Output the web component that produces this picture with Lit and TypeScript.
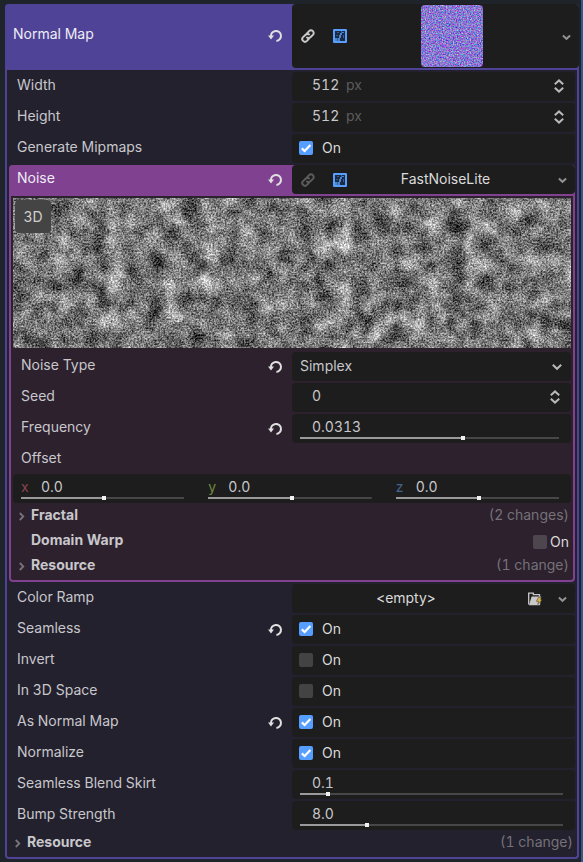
import { LitElement, html, css, nothing } from "lit";
import { customElement, property } from "lit/decorators.js";

const revertIcon = html`<svg class="i" width="16" height="16" viewBox="0 0 16 16" aria-hidden="true">
  <path d="M3 8.4A5 5 0 1 1 8.4 12.9" fill="none" stroke="currentColor" stroke-width="2" />
  <path d="M0 7.4h6L3 11.4z" fill="currentColor" />
</svg>`;

const linkIcon = html`<svg class="i" width="14" height="14" viewBox="0 0 14 14" fill="none" stroke="currentColor" stroke-width="2" stroke-linecap="round" aria-hidden="true">
  <path d="M6.2 4.2 8.1 2.1a2.65 2.65 0 0 1 3.8 3.8L9.4 8.3a2.6 2.6 0 0 1-3.4.2" />
  <path d="M7.8 9.8 5.9 11.9a2.65 2.65 0 0 1-3.8-3.8L4.6 5.7A2.6 2.6 0 0 1 8 5.5" />
</svg>`;

const textureIcon = html`<svg class="i" width="14" height="14" viewBox="0 0 14 14" aria-hidden="true">
  <rect width="14" height="14" rx="1" fill="#569eff" />
  <rect x="2" y="2" width="10" height="10" fill="#1d2a3d" />
  <path d="M9 3h2v1H9v2H8v3H7v3H5V9h1V6h1V4h2zM2 9h2v3H2z" fill="#4a86d6" />
  <path d="M4 3h2v1H4zM3 6h2v1H3zM10 6h1v3h-1zM4 9h1v3H4zM8 2h1v2H8z" fill="#33609f" />
</svg>`;

const chevron = html`<svg class="i" width="9" height="9" viewBox="0 0 9 9" fill="none" stroke="currentColor" stroke-width="2" aria-hidden="true">
  <path d="M.9 2.6l3.6 3.2L8.1 2.6" />
</svg>`;

const wideChevron = html`<svg class="i" width="10" height="8" viewBox="0 0 10 8" fill="none" stroke="currentColor" stroke-width="2" aria-hidden="true">
  <path d="M.8 1.8 5 5.8l4.2-4" />
</svg>`;

const foldChevron = html`<svg class="i" width="6" height="9" viewBox="0 0 6 9" fill="none" stroke="currentColor" stroke-width="1.8" aria-hidden="true">
  <path d="M.8 1 4.3 4.5.8 8" />
</svg>`;

const spinIcon = html`<svg class="i" width="10" height="14" viewBox="0 0 10 14" fill="none" stroke="currentColor" stroke-width="2" aria-hidden="true">
  <path d="M.8 5.2 5 1.4l4.2 3.8M.8 8.8 5 12.6l4.2-3.8" />
</svg>`;

const folderIcon = html`<svg class="i" width="14" height="14" viewBox="0 0 14 14" aria-hidden="true">
  <path d="M.7 12.6V1.2h4.6v1.4h6.2v1.8" fill="none" stroke="#c8c8c8" stroke-width="1.3" />
  <path d="M1 13.2 3.6 4.4h9.6L12 13.2z" fill="#c8c8c8" />
  <path d="M10.4 5.4h2.8l-.6 2.4h1.6L9.8 12.6l.8-3.2H8.4z" fill="#d8b04c" stroke="#3a3424" stroke-width=".5" />
</svg>`;

const shared = css`
  :host { display: block; }
  * { box-sizing: border-box; }
  .i { display: block; flex: none; }
  button, input, select { font: inherit; font-variant-numeric: inherit; color: inherit; margin: 0; padding: 0; border: 0; background: none; }
  button { display: flex; align-items: center; justify-content: center; }
`;

@customElement("prop-row")
class PropRow extends LitElement {
  @property() label = "";
  @property({ type: Boolean }) changed = false;
  @property() variant = "";

  static styles = [shared, css`
    .row { display: grid; grid-template-columns: 1fr 1fr; align-items: stretch; }
    .head { display: flex; align-items: center; justify-content: space-between; padding: 0 8px; min-height: 27px; }
    .label { line-height: 24px; padding-bottom: 3px; white-space: nowrap; }
    .revert { color: #e0e0e0; }
    .control { display: grid; min-height: 29px; background: #1d1d1d; border-radius: 4px; min-width: 0; }
    .outer, .inner { color: #eeecf4; border-radius: 4px 4px 0 0; padding-bottom: 2px; }
    .outer { background: #4f4397; }
    .outer .control { min-height: 64px; }
    .outer .label { padding-bottom: 4px; }
    .inner { background: #7f4190; }
    .bare .control { display: none; }
    .bare .label { padding-bottom: 2px; }
  `];

  render() {
    return html`<div class="row ${this.variant}">
      <div class="head">
        <span class="label">${this.label}</span>
        ${this.changed ? html`<button class="revert" aria-label="Revert ${this.label}">${revertIcon}</button>` : nothing}
      </div>
      <div class="control"><slot></slot></div>
    </div>`;
  }
}

@customElement("prop-number")
class PropNumber extends LitElement {
  @property() name = "";
  @property() value = "";
  @property() unit = "";
  @property() axis = "";
  @property({ type: Number }) fill = -1;

  static styles = [shared, css`
    .num { display: flex; flex-direction: column; padding: 4px 12px 3px 8px; }
    .num.spinner { padding-right: 11px; }
    .num.axis { padding-left: 0; padding-right: 0; }
    .line { display: flex; align-items: center; height: 18px; padding-left: 12px; }
    .axis .line { padding-left: 0; }
    .text { width: 100%; min-width: 0; flex: 1; line-height: 18px; height: 18px; outline: 0; }
    .text.fit { flex: none; width: 34px; }
    .unit { flex: 1; color: #5c5c5c; }
    .tag { width: 20px; }
    .tag.x { color: #8a4450; }
    .tag.y { color: #72883f; }
    .tag.z { color: #41648f; }
    .spin { color: #b8b8b8; padding-top: 2px; }
    .range { appearance: none; display: block; width: 100%; height: 4px;
      background: linear-gradient(to right, #9a9a9a var(--fill), #474747 var(--fill)) center / 100% 2px no-repeat; }
    .range::-webkit-slider-thumb { appearance: none; width: 4px; height: 4px; background: #f0f0f0; border: 0; }
    .range::-moz-range-thumb { width: 4px; height: 4px; background: #f0f0f0; border: 0; border-radius: 0; }
  `];

  render() {
    const kind = this.axis ? "axis" : this.fill < 0 ? "spinner" : "";
    return html`<div class="num ${kind}">
      <div class="line">
        ${this.axis ? html`<span class="tag ${this.axis}">${this.axis}</span>` : nothing}
        <input class="text ${this.unit ? "fit" : ""}" aria-label=${this.name} .value=${this.value} />
        ${this.unit ? html`<span class="unit">${this.unit}</span>` : nothing}
        ${this.fill < 0 ? html`<button class="spin" aria-label="Step ${this.name}">${spinIcon}</button>` : nothing}
      </div>
      ${this.fill < 0 ? nothing : html`<input class="range" type="range" min="0" max="100" step="0.1" aria-label="${this.name} slider"
        .value=${String(this.fill)} style="--fill:${this.fill}%" />`}
    </div>`;
  }
}

@customElement("prop-check")
class PropCheck extends LitElement {
  @property() name = "";
  @property({ type: Boolean }) on = false;
  @property({ type: Boolean }) compact = false;

  static styles = [shared, css`
    .check { display: flex; align-items: center; gap: 9px; height: 28px; padding-left: 7px; color: #dadada; }
    .check.compact { gap: 3px; height: 23px; padding: 1px 0 0; }
    .compact .box { background: #4e464e; }
    .cell { display: grid; width: 14px; height: 14px; }
    .cell > * { grid-area: 1 / 1; }
    .box { appearance: none; width: 14px; height: 14px; border-radius: 2px; background: #434343; }
    .box:checked { background: #569eff; }
    .tick { display: none; pointer-events: none; z-index: 1; }
    .box:checked + .tick { display: block; }
  `];

  render() {
    return html`<label class="check ${this.compact ? "compact" : ""}">
      <span class="cell">
        <input class="box" type="checkbox" aria-label="${this.name} On" .checked=${this.on} />
        <svg class="tick" width="14" height="14" viewBox="0 0 14 14" fill="none" stroke="#fff" stroke-width="2.2" aria-hidden="true"><path d="M2.8 7.4 5.6 10l5.8-6" /></svg>
      </span>
      <span>On</span>
    </label>`;
  }
}

@customElement("prop-fold")
class PropFold extends LitElement {
  @property() label = "";
  @property() note = "";
  @property({ type: Boolean }) leaf = false;

  static styles = [shared, css`
    .fold { display: flex; align-items: center; justify-content: space-between; height: 23px; padding: 0 2px 0 6px; }
    .title { display: flex; gap: 6px; font-weight: 700; height: 23px; }
    .mark { width: 6px; color: #77747c; }
    .text, .note { line-height: 19px; padding-bottom: 4px; }
    .note { color: #75717a; }
  `];

  render() {
    return html`<div class="fold">
      <button class="title"><span class="mark">${this.leaf ? nothing : foldChevron}</span><span class="text">${this.label}</span></button>
      ${this.note ? html`<span class="note">${this.note}</span>` : nothing}<slot></slot>
    </div>`;
  }
}

@customElement("app-root")
class AppRoot extends LitElement {
  static styles = [shared, css`
    :host { min-height: 100vh; padding: 4px 2px 3px 5px; background: #1f242b; border-right: 2px solid #30598c;
      color: #c8c7cc; font: 14px/20px Inter, "Noto Sans", sans-serif; font-variant-numeric: tabular-nums; box-sizing: border-box; }
    .panel { border: 2px solid #4f4397; border-top: 0; border-radius: 4px; background: #23212d; }
    .top { display: block; margin: 0 -2px; }
    .body { display: grid; gap: 2px; padding: 2px; }
    .sub { border: 2px solid #7f4190; border-top: 0; border-radius: 4px; background: #2c212c; }
    .preview { display: grid; height: 150px; margin-bottom: 2px; overflow: hidden; }
    .preview > * { grid-area: 1 / 1; }
    .noise { display: block; width: 100%; height: 150px; }
    .mode { z-index: 1; width: 36px; height: 33px; margin: 2px; border-radius: 4px; background: #444; color: #d0d0d0; }
    .res { display: flex; align-items: center; padding: 0 8px 0 9px; gap: 18px; color: #dadada; }
    .link { color: #c8c8c8; }
    .dim { color: #5c5c5c; }
    .name { flex: 1; padding: 0 14px 2px 0; }
    .drop { color: #929292; width: 9px; height: 16px; padding-top: 2px; }
    .thumb { flex: 1; display: flex; justify-content: center; padding-right: 6px; }
    .thumb svg { border-radius: 4px; }
    .ramp { gap: 16px; padding-left: 0; }
    .ramp .name { padding: 0 0 2px 8px; }
    .select { display: grid; align-items: center; }
    .select > * { grid-area: 1 / 1; }
    .list { appearance: none; width: 100%; height: 29px; padding: 0 8px 2px; outline: 0; }
    .arrow { justify-self: end; margin-right: 9px; pointer-events: none; color: #b8b8b8; }
    .axes { display: grid; grid-template-columns: 1fr 1fr 1fr; gap: 24px; padding: 0 12px 0 8px; background: #1d1d1d; border-radius: 4px; }
  `];

  render() {
    return html`<main class="panel">
      <prop-row class="top" variant="outer" label="Normal Map" changed>
        <div class="res">
          <button class="link" aria-label="Make unique">${linkIcon}</button>
          ${textureIcon}
          <div class="thumb">
            <svg width="62" height="62" role="img" aria-label="Normal map texture">
              <filter id="normal" x="0" y="0" width="100%" height="100%" color-interpolation-filters="sRGB">
                <feTurbulence type="fractalNoise" baseFrequency=".71" numOctaves="3" seed="4" />
                <feColorMatrix values="1.1 0 0 0 -.02  0 1.1 0 0 -.08  0 0 .5 0 .57  0 0 0 0 1" />
              </filter>
              <rect width="62" height="62" filter="url(#normal)" />
            </svg>
          </div>
          <button class="drop" aria-label="Texture options">${chevron}</button>
        </div>
      </prop-row>
      <div class="body">
        <prop-row label="Width"><prop-number name="Width" value="512" unit="px"></prop-number></prop-row>
        <prop-row label="Height"><prop-number name="Height" value="512" unit="px"></prop-number></prop-row>
        <prop-row label="Generate Mipmaps"><prop-check name="Generate Mipmaps" on></prop-check></prop-row>
        <section class="sub">
          <prop-row class="top" variant="inner" label="Noise" changed>
            <div class="res">
              <button class="dim" aria-label="Make unique">${linkIcon}</button>
              ${textureIcon}
              <button class="name">FastNoiseLite</button>
              <button class="drop" aria-label="Noise options">${chevron}</button>
            </div>
          </prop-row>
          <div class="body">
            <div class="preview">
              <svg class="noise" role="img" aria-label="Noise preview">
                <filter id="simplex" x="0" y="0" width="100%" height="100%" color-interpolation-filters="sRGB">
                  <feTurbulence type="fractalNoise" baseFrequency=".053" numOctaves="5" seed="23" />
                  <feColorMatrix values=".6 .4 0 0 0  .6 .4 0 0 0  .6 .4 0 0 0  0 0 0 0 1" result="soft" />
                  <feTurbulence type="fractalNoise" baseFrequency=".57" numOctaves="2" seed="5" />
                  <feColorMatrix values="1 0 0 0 0  1 0 0 0 0  1 0 0 0 0  0 0 0 0 1" result="grain" />
                  <feComposite in="soft" in2="grain" operator="arithmetic" k2=".55" k3=".45" />
                  <feColorMatrix values="2.1 0 0 0 -.58  2.1 0 0 0 -.58  2.1 0 0 0 -.58  0 0 0 0 1" />
                </filter>
                <rect width="100%" height="150" filter="url(#simplex)" />
              </svg>
              <button class="mode">3D</button>
            </div>
            <prop-row label="Noise Type" changed>
              <div class="select">
                <select class="list" aria-label="Noise Type"><option>Simplex</option></select>
                <span class="arrow">${wideChevron}</span>
              </div>
            </prop-row>
            <prop-row label="Seed"><prop-number name="Seed" value="0"></prop-number></prop-row>
            <prop-row label="Frequency" changed><prop-number name="Frequency" value="0.0313" fill="63"></prop-number></prop-row>
            <prop-row label="Offset" variant="bare"></prop-row>
            <div class="axes">
              ${["x", "y", "z"].map((a) => html`<prop-number name="Offset ${a}" axis=${a} value="0.0" fill="51"></prop-number>`)}
            </div>
            <prop-fold label="Fractal" note="(2 changes)"></prop-fold>
            <prop-fold label="Domain Warp" leaf><prop-check name="Domain Warp" compact></prop-check></prop-fold>
            <prop-fold label="Resource" note="(1 change)"></prop-fold>
          </div>
        </section>
        <prop-row label="Color Ramp">
          <div class="res ramp">
            <button class="name">&lt;empty&gt;</button>
            <button aria-label="Load resource">${folderIcon}</button>
            <button class="drop" aria-label="Color ramp options">${chevron}</button>
          </div>
        </prop-row>
        <prop-row label="Seamless" changed><prop-check name="Seamless" on></prop-check></prop-row>
        <prop-row label="Invert"><prop-check name="Invert"></prop-check></prop-row>
        <prop-row label="In 3D Space"><prop-check name="In 3D Space"></prop-check></prop-row>
        <prop-row label="As Normal Map" changed><prop-check name="As Normal Map" on></prop-check></prop-row>
        <prop-row label="Normalize"><prop-check name="Normalize" on></prop-check></prop-row>
        <prop-row label="Seamless Blend Skirt"><prop-number name="Seamless Blend Skirt" value="0.1" fill="10"></prop-number></prop-row>
        <prop-row label="Bump Strength"><prop-number name="Bump Strength" value="8.0" fill="25"></prop-number></prop-row>
        <prop-fold label="Resource" note="(1 change)"></prop-fold>
      </div>
    </main>`;
  }
}
